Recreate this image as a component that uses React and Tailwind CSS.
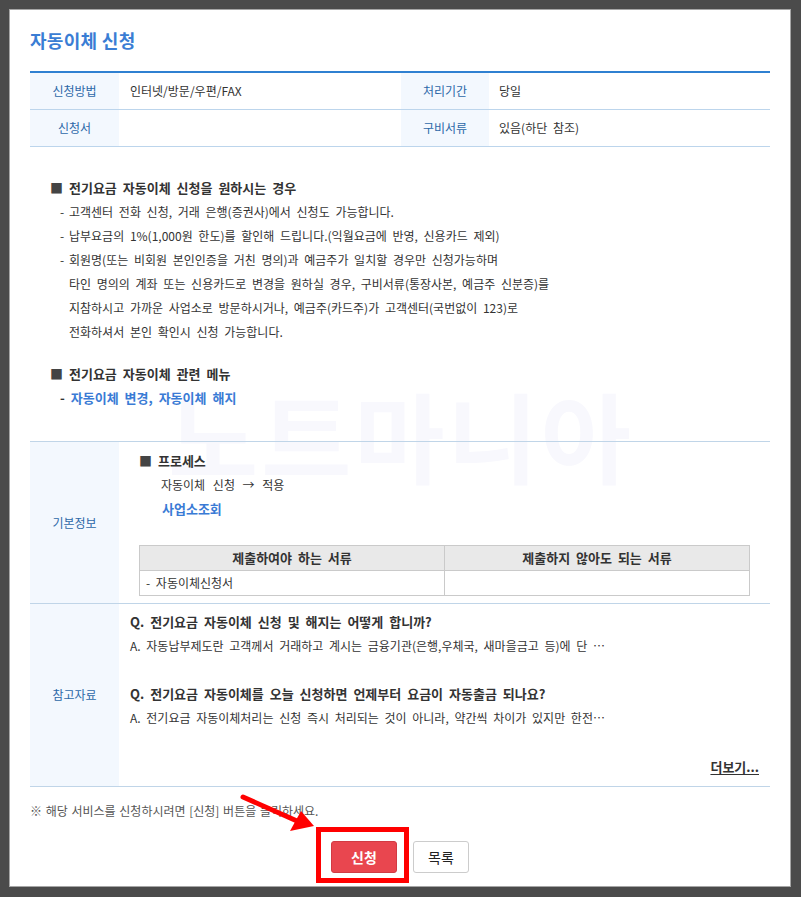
import React from 'react';

const font = { fontFamily: '"Noto Sans CJK KR", "Noto Sans", sans-serif' };

function InfoRow({ l1, v1, l2, v2 }) {
  return (
    <div className="grid grid-cols-[89px_282px_88px_1fr] h-[37px] border-b border-[#bcd5ec] text-[12px] items-stretch">
      <div className="bg-[#f3f8fe] text-[#2d68a8] flex items-center justify-center">{l1}</div>
      <div className="flex items-center pl-[11px] text-[#333]">{v1}</div>
      <div className="bg-[#f3f8fe] text-[#2d68a8] flex items-center justify-center">{l2}</div>
      <div className="flex items-center pl-[10px] text-[#333]">{v2}</div>
    </div>
  );
}

function Item({ children }) {
  return (
    <div className="flex pl-[10px] text-[12px] text-[#333] leading-[24px]">
      <span className="w-[9px] shrink-0">-</span>
      <span>{children}</span>
    </div>
  );
}

export default function App() {
  return (
    <div className="h-[897px] bg-[#4b4b4b] pt-[9px] pl-[9px] pr-[10px] pb-[10px] [word-spacing:3px]" style={font}>
      <div className="relative h-full bg-white border border-[#a6a6a6] px-[20px] overflow-hidden">
        {/* watermark */}
        <div className="absolute left-[158px] top-[374px] text-[98px] leading-none font-bold text-[#f8f8fd] tracking-[3px] [word-spacing:0] pointer-events-none select-none">
          노트마니아
        </div>

        <div className="relative">
          <h1 className="pt-[18px] text-[18px] leading-[24px] font-bold text-[#3a7dd4] tracking-[0.3px] [word-spacing:0]">자동이체 신청</h1>

          <div className="mt-[19px] border-t-2 border-[#2f80d1]">
            <InfoRow l1="신청방법" v1="인터넷/방문/우편/FAX" l2="처리기간" v2="당일" />
            <InfoRow l1="신청서" v1="" l2="구비서류" v2="있음(하단 참조)" />
          </div>

          <div className="mt-[29px] pl-[20px]">
            <div className="text-[13px] font-bold text-[#333] leading-[24px]"><span className="text-[#444]">■</span> 전기요금 자동이체 신청을 원하시는 경우</div>
            <Item>고객센터 전화 신청, 거래 은행(증권사)에서 신청도 가능합니다.</Item>
            <Item>납부요금의 1%(1,000원 한도)를 할인해 드립니다.(익월요금에 반영, 신용카드 제외)</Item>
            <Item>
              회원명(또는 비회원 본인인증을 거친 명의)과 예금주가 일치할 경우만 신청가능하며<br />
              타인 명의의 계좌 또는 신용카드로 변경을 원하실 경우, 구비서류(통장사본, 예금주 신분증)를<br />
              지참하시고 가까운 사업소로 방문하시거나, 예금주(카드주)가 고객센터(국번없이 123)로<br />
              전화하셔서 본인 확인시 신청 가능합니다.
            </Item>

            <div className="mt-[18px] text-[13px] font-bold text-[#333] leading-[24px]"><span className="text-[#444]">■</span> 전기요금 자동이체 관련 메뉴</div>
            <div className="pl-[10px] text-[13px] font-bold leading-[24px]">
              <span className="text-[#333]">- </span>
              <span className="text-[#3a7bd5]">자동이체 변경, 자동이체 해지</span>
            </div>
          </div>

          <div className="mt-[31px] border-t border-[#c0d5e8]">
            <div className="grid grid-cols-[89px_1fr] border-b border-[#c0d5e8]">
              <div className="bg-[#f3f8fe] text-[#2d68a8] text-[12px] flex items-center justify-center">기본정보</div>
              <div className="pl-[20px] pr-[20px] pt-[7px] pb-[7px]">
                <div className="text-[13px] font-bold text-[#333] leading-[24px]"><span className="text-[#444]">■</span> 프로세스</div>
                <div className="pl-[22px] text-[12px] text-[#333] leading-[24px] [word-spacing:5px]">자동이체 신청 → 적용</div>
                <div className="pl-[23px] text-[13px] font-bold text-[#3a7bd5] leading-[24px]">사업소조회</div>
                <div className="mt-[24px] border border-[#cacaca]">
                  <div className="grid grid-cols-[305px_1fr] h-[25px] bg-[#e9e9e9] border-b border-[#cacaca] text-[13px] font-bold text-[#333]">
                    <div className="flex items-center justify-center border-r border-[#cacaca]">제출하여야 하는 서류</div>
                    <div className="flex items-center justify-center">제출하지 않아도 되는 서류</div>
                  </div>
                  <div className="grid grid-cols-[305px_1fr] h-[24px] text-[12px] text-[#333]">
                    <div className="flex items-center pl-[6px] border-r border-[#cacaca]">- 자동이체신청서</div>
                    <div></div>
                  </div>
                </div>
              </div>
            </div>

            <div className="grid grid-cols-[89px_1fr] border-b border-[#c0d5e8]">
              <div className="bg-[#f3f8fe] text-[#2d68a8] text-[12px] flex items-center justify-center">참고자료</div>
              <div className="pl-[11px] pr-[11px] pt-[6px] pb-[7px] leading-[24px]">
                <div className="text-[13px] font-bold text-[#333]">Q. 전기요금 자동이체 신청 및 해지는 어떻게 합니까?</div>
                <div className="text-[12px] text-[#333]">A. 자동납부제도란 고객께서 거래하고 계시는 금융기관(은행,우체국, 새마을금고 등)에 단 …</div>
                <div className="mt-[24px] text-[13px] font-bold text-[#333]">Q. 전기요금 자동이체를 오늘 신청하면 언제부터 요금이 자동출금 되나요?</div>
                <div className="text-[12px] text-[#333]">A. 전기요금 자동이체처리는 신청 즉시 처리되는 것이 아니라, 약간씩 차이가 있지만 한전…</div>
                <div className="mt-[25px] flex justify-end">
                  <span className="text-[13px] font-bold text-[#333] underline underline-offset-2">더보기...</span>
                </div>
              </div>
            </div>
          </div>

          <div className="mt-[14px] text-[12px] leading-[20px] text-[#555] [word-spacing:1px]">※ 해당 서비스를 신청하시려면 [신청] 버튼을 클릭하세요.</div>

          <div className="mt-[20px] flex justify-center gap-[16px]">
            <button className="w-[66px] h-[32px] bg-[#e9464f] border border-[#d23a43] rounded-[3px] text-white text-[14px] font-bold">신청</button>
            <button className="w-[56px] h-[32px] bg-white border border-[#cccccc] rounded-[3px] text-[#222] text-[14px]">목록</button>
          </div>
        </div>

        {/* annotation: arrow and highlight box */}
        <svg className="absolute left-[225px] top-[780px] pointer-events-none" width="90" height="50" viewBox="0 0 90 50">
          <line x1="8" y1="7" x2="62" y2="31" stroke="#ff0000" strokeWidth="5" strokeLinecap="round" />
          <polygon points="79,36 55,41 66,21" fill="#ff0000" />
        </svg>
        <div className="absolute left-[306px] top-[817px] w-[93px] h-[56px] border-[5px] border-[#ff0000] pointer-events-none" />
      </div>
    </div>
  );
}
